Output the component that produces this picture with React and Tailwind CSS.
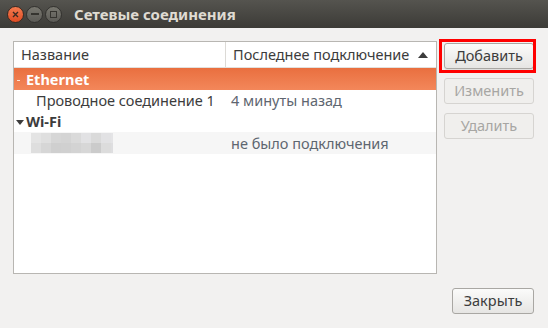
import React from "react";

const font = { fontFamily: '"Noto Sans", "Open Sans", sans-serif' };

const blurCols = [
  ["#e4e4e4", "#dedede"],
  ["#dfdfdf", "#d6d6d6"],
  ["#d6d6d6", "#cfcfcf"],
  ["#d4d4d4", "#d0d0d0"],
  ["#dadada", "#d3d3d3"],
  ["#e2e2e4", "#d7d7d7"],
  ["#dadada", "#cbcbcb"],
  ["#e2e2e4", "#dcdcdc"],
];

function Btn({ children, disabled }) {
  return (
    <div
      className={
        "h-[26px] w-[90px] rounded-[3px] border flex items-center justify-center text-[14.5px] " +
        (disabled
          ? "border-[#d6d4d1] bg-[#f0efed] text-[#a7a6a3]"
          : "border-[#a9a7a3] bg-gradient-to-b from-[#fbfbfa] to-[#e6e5e3] text-[#3c3c3c] shadow-[0_1px_0_rgba(0,0,0,0.08)]")
      }
    >
      {children}
    </div>
  );
}

export default function App() {
  return (
    <div className="w-[548px] h-[328px] bg-[#f2f1f0] flex flex-col overflow-hidden" style={font}>
      {/* title bar */}
      <div className="h-[28px] bg-gradient-to-b from-[#55544f] to-[#3c3b37] flex items-center pl-[7px] shrink-0">
        <div className="w-[17px] h-[17px] rounded-full bg-gradient-to-b from-[#f47a4e] to-[#df4b22] border border-[#3a2a22] flex items-center justify-center">
          <svg width="7" height="7" viewBox="0 0 7 7">
            <path d="M1 1L6 6M6 1L1 6" stroke="#3c2a22" strokeWidth="1.4" />
          </svg>
        </div>
        <div className="ml-[2px] w-[17px] h-[17px] rounded-full bg-gradient-to-b from-[#78776f] to-[#5c5b56] border border-[#33322f] flex items-center justify-center">
          <div className="w-[8px] h-[2px] bg-[#35342f]" />
        </div>
        <div className="ml-[2px] w-[17px] h-[17px] rounded-full bg-gradient-to-b from-[#78776f] to-[#5c5b56] border border-[#33322f] flex items-center justify-center">
          <div className="w-[7px] h-[7px] border-[1.5px] border-[#35342f]" />
        </div>
        <div className="ml-[12px] text-[15px] font-bold text-[#dfdbd2]">Сетевые соединения</div>
      </div>

      <div className="flex-1 flex flex-col pl-[13px] pr-[14px] pt-[13px]">
        <div className="flex gap-[7px]">
          {/* table */}
          <div className="w-[424px] h-[233px] border border-[#b8b6b2] bg-white flex flex-col text-[14.5px] text-[#3c3c3c]">
            <div className="h-[26px] flex border-b border-[#e2e0dd] shrink-0">
              <div className="w-[212px] border-r border-[#dcdad6] pl-[7px] flex items-center">Название</div>
              <div className="flex-1 pl-[7px] pr-[8px] flex items-center justify-between">
                <span>Последнее подключение</span>
                <svg width="10" height="6" viewBox="0 0 10 6"><path d="M0 6L5 0L10 6Z" fill="#3c3c3c" /></svg>
              </div>
            </div>
            <div className="h-[22px] flex items-center pt-[2px] bg-gradient-to-b from-[#e96f3f] to-[#f3875a] text-white font-bold">
              <div className="w-[6px] flex justify-end">
                <div className="w-[3px] h-[1px] bg-[#fde2d5]" />
              </div>
              <span className="ml-[6px]">Ethernet</span>
            </div>
            <div className="h-[21px] flex items-center pt-[1px]">
              <div className="w-[217px] pl-[22px]">Проводное соединение 1</div>
              <div className="text-[#5e6670]">4 минуты назад</div>
            </div>
            <div className="h-[21px] flex items-center pt-[1px] font-bold">
              <div className="w-[10px] flex justify-end">
                <svg width="8" height="5" viewBox="0 0 8 5"><path d="M0 0L8 0L4 5Z" fill="#3c3c3c" /></svg>
              </div>
              <span className="ml-[2px]">Wi-Fi</span>
            </div>
            <div className="h-[22px] flex items-center bg-[#f6f6f6]">
              <div className="w-[217px] pl-[17px]">
                <div className="flex">
                  {blurCols.map((c, i) => (
                    <div key={i} className="flex flex-col">
                      <div className="w-[10px] h-[10px]" style={{ background: c[0] }} />
                      <div className="w-[10px] h-[10px]" style={{ background: c[1] }} />
                    </div>
                  ))}
                  <div className="flex flex-col">
                    <div className="w-[2px] h-[10px] bg-[#e4e4e6]" />
                    <div className="w-[2px] h-[10px] bg-[#dedee0]" />
                  </div>
                </div>
              </div>
              <div className="text-[#5e6670] pt-[1px]">не было подключения</div>
            </div>
          </div>

          {/* buttons */}
          <div className="flex flex-col gap-[9px] pt-[2px]">
            <div className="relative">
              <Btn>Добавить</Btn>
              <div className="absolute -left-[5px] -top-[4px] w-[97px] h-[34px] border-[3px] border-[#ff0000]" />
            </div>
            <Btn disabled>Изменить</Btn>
            <Btn disabled>Удалить</Btn>
          </div>
        </div>

        <div className="flex justify-end mt-[14px]">
          <div className="w-[82px]">
            <div className="h-[26px] w-[82px] rounded-[3px] border border-[#a9a7a3] bg-gradient-to-b from-[#fbfbfa] to-[#e6e5e3] text-[#3c3c3c] text-[14.5px] flex items-center justify-center">
              Закрыть
            </div>
          </div>
        </div>
      </div>
    </div>
  );
}
